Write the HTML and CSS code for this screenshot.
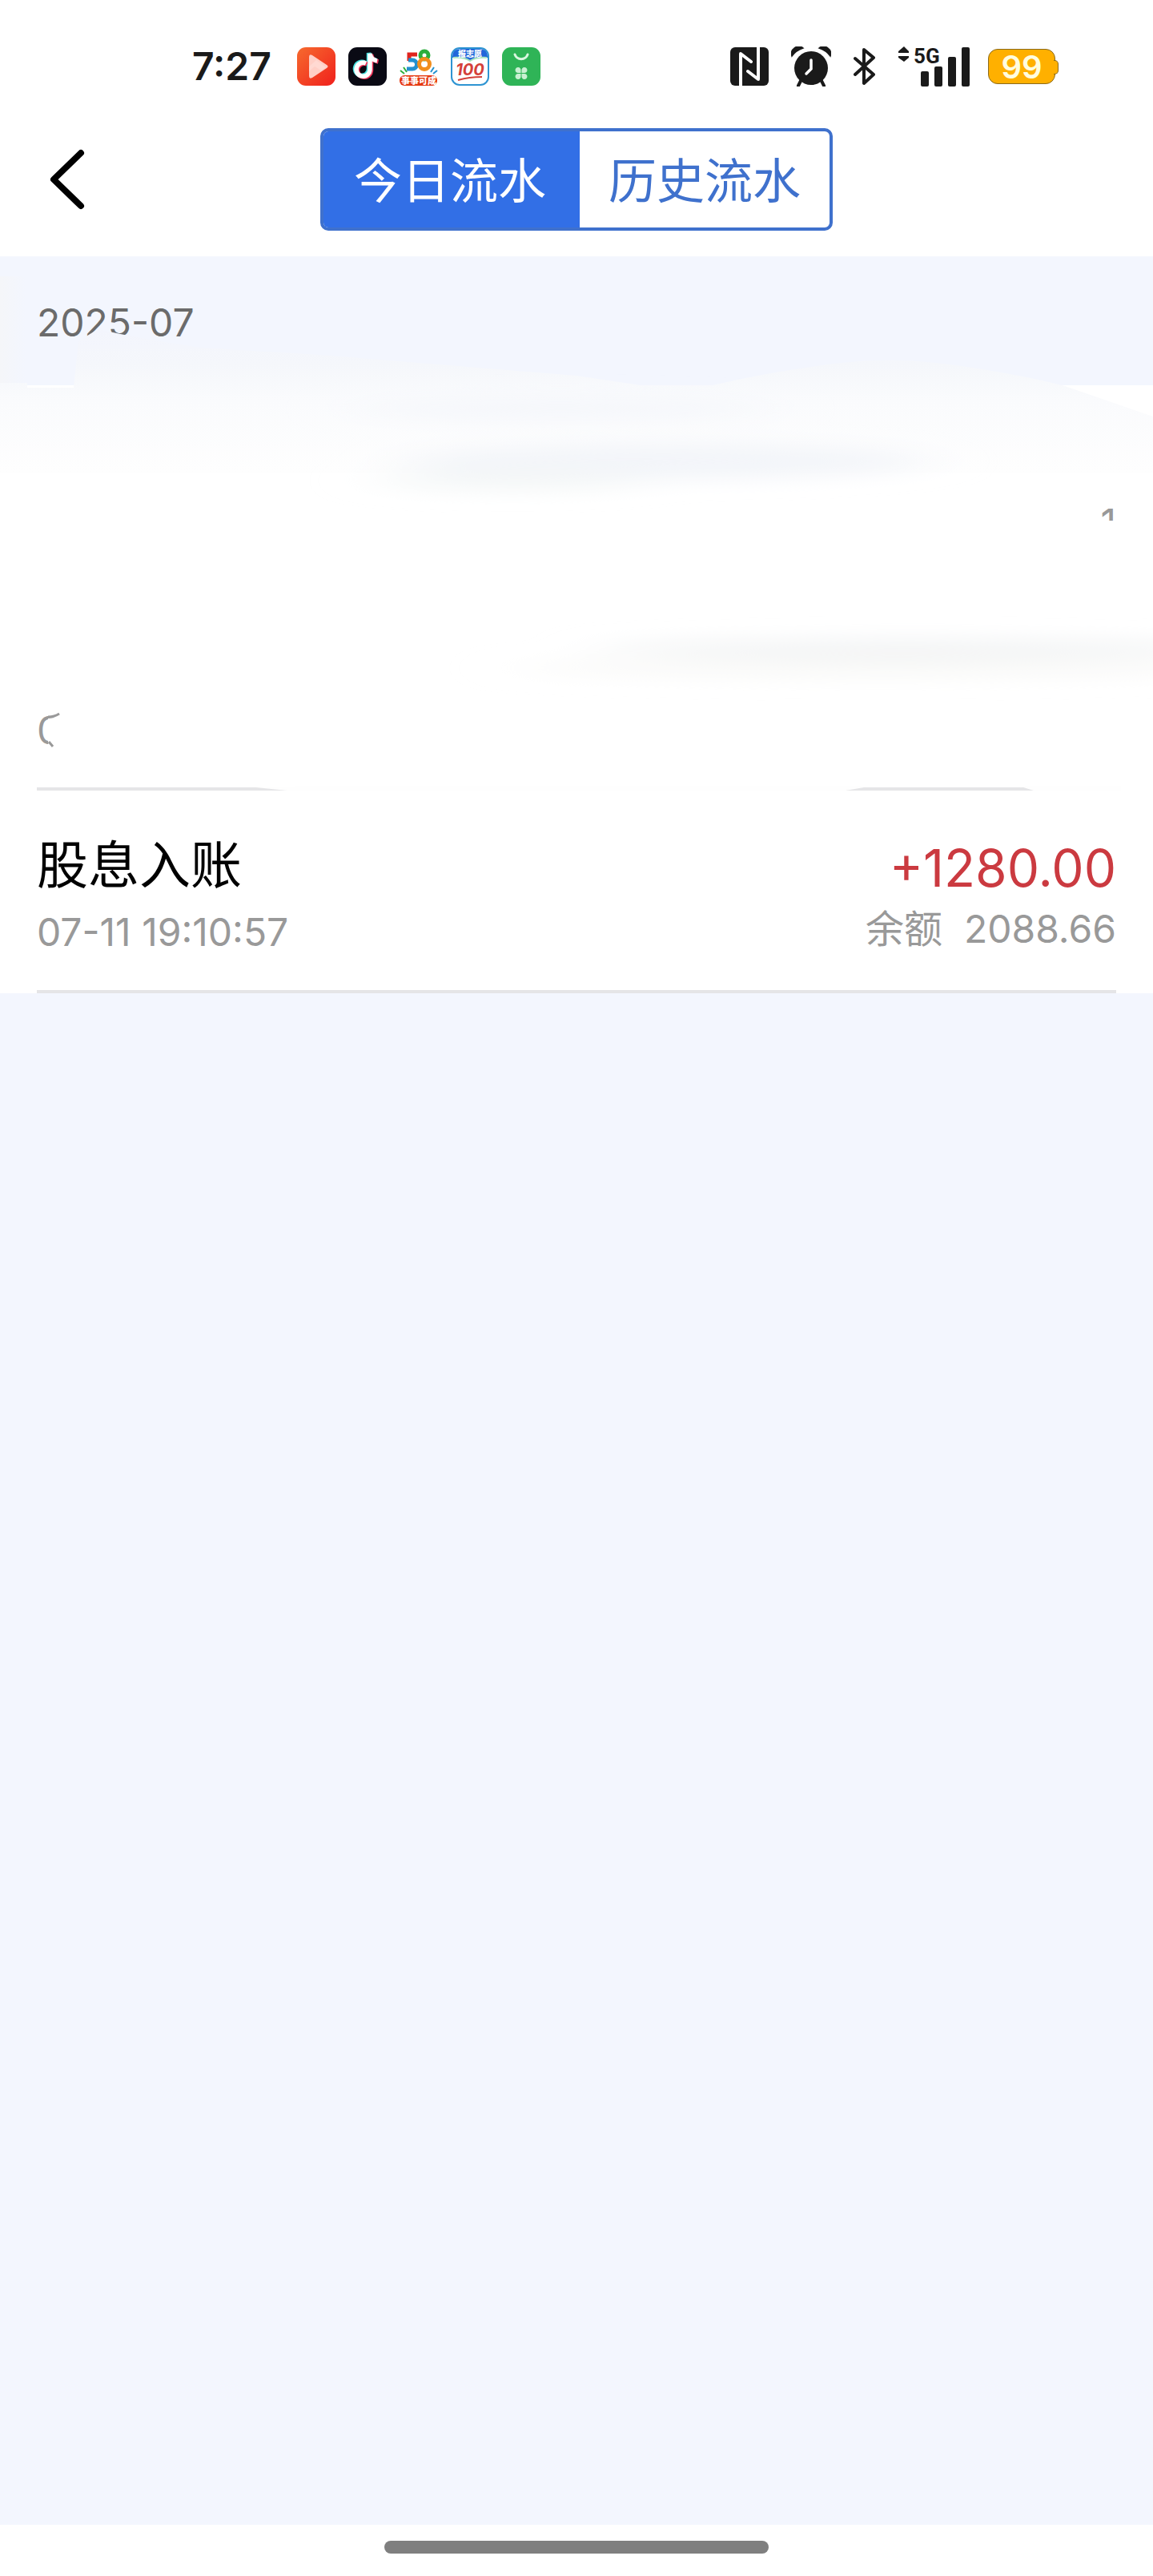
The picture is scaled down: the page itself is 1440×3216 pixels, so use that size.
FILE: index.html
```
<!DOCTYPE html>
<html lang="zh-CN">

<head>
    <meta charset="UTF-8">
    <meta name="viewport" content="width=device-width, initial-scale=1.0">
    <title>今日流水</title>
    <link rel="stylesheet" href="styles.css">
</head>

<body>
    <div class="status">
        <span class="time">7:27</span>
        <div class="apps">
            <svg class="app" viewBox="0 0 48 48">
                <defs>
                    <linearGradient id="playBg" x1="0" y1="0" x2="1" y2="1">
                        <stop offset="0" stop-color="#f66a2e" />
                        <stop offset="1" stop-color="#f0201c" />
                    </linearGradient>
                </defs>
                <rect width="48" height="48" rx="11" fill="url(#playBg)" />
                <path d="M15 12q0-4 4-2l18 12q3 2 0 4L19 38q-4 2-4-2z" fill="#ffcfc6" />
                <path d="M15 24l9-8 12 9-6 4-8-5-7 6z" fill="#ffe3dd" opacity=".5" />
            </svg>
            <svg class="app" viewBox="0 0 48 48">
                <rect width="48" height="48" rx="11" fill="#0a0a14" />
                <g fill="none" stroke-width="5.5">
                    <path d="M22 20a8.500 8.500 0 1 0 5 8V8c1 6 4 8 9 9" stroke="#46e0e0" transform="translate(-1.500 -1)" />
                    <path d="M22 20a8.500 8.500 0 1 0 5 8V8c1 6 4 8 9 9" stroke="#f0345a" transform="translate(1.500 1)" />
                    <path d="M22 20a8.500 8.500 0 1 0 5 8V8c1 6 4 8 9 9" stroke="#fff" />
                </g>
            </svg>
            <svg class="app" viewBox="0 0 48 48">
                <g fill="none" stroke-width="5">
                    <path d="M22 9H12v8" stroke="#e0231d" />
                    <path d="M11 16h5a5.500 5.500 0 0 1 0 11H9" stroke="#2291cf" />
                    <circle cx="31" cy="10" r="5" stroke="#2cae3c" />
                    <circle cx="31" cy="21" r="6.500" stroke="#f18e1c" />
                </g>
                <path d="M1 29l5 4M5 25l4 6" stroke="#2cae3c" stroke-width="2" />
                <path d="M47 29l-5 4M43 25l-4 6" stroke="#2291cf" stroke-width="2" />
                <rect y="35" width="47" height="13" rx="6" fill="#e5380f" />
                <text class="app-tag" x="24" y="46" font-size="11">事事可成</text>
            </svg>
            <svg class="app" viewBox="0 0 48 48">
                <rect x="1" y="1" width="46" height="46" rx="10" fill="#fff" stroke="#2e94d2" stroke-width="2" />
                <path d="M2 12Q2 2 12 2h24q10 0 10 10v1q-14-1-22 4-8-5-22-4z" fill="#2167da" />
                <path d="M3 13q13-1 21 4 8-5 21-4" fill="none" stroke="#a8e6c0" stroke-width="2" />
                <text class="app-tag" x="24" y="12" font-size="10">报志愿</text>
                <text class="app-score" x="24" y="35" font-size="20">100</text>
                <path d="M9 41q14-4 30-4" fill="none" stroke="#d4403a" stroke-width="2" />
            </svg>
            <svg class="app" viewBox="0 0 48 48">
                <rect width="48" height="48" rx="11" fill="#2fb457" />
                <path d="M16 9a8.500 8.500 0 0 0 16 0" fill="none" stroke="#d9f6df" stroke-width="3" stroke-linecap="round" />
                <g fill="#c9f0d2">
                    <path d="M23.500 32h-3a3.500 3.500 0 1 1 3-3z" />
                    <path d="M24.500 32h3a3.500 3.500 0 1 0-3-3z" />
                    <path d="M23.500 33h-3a3.500 3.500 0 1 0 3 3z" />
                    <path d="M24.500 33h3a3.500 3.500 0 1 1-3 3z" />
                </g>
            </svg>
        </div>
        <div class="signals">
            <svg class="nfc" viewBox="0 0 48 48">
                <rect width="48" height="48" rx="6" fill="#1a1a1a" />
                <path d="M13 48V8l13 10M35 0v40L22 30" fill="none" stroke="#fff" stroke-width="4" stroke-linejoin="round" stroke-linecap="round" />
            </svg>
            <svg class="alarm" viewBox="0 0 50 50">
                <g fill="#1a1a1a">
                    <circle cx="25" cy="27" r="21" />
                    <path d="M1 12A9 9 0 0 1 15 2q-9 3-14 10zM49 12A9 9 0 0 0 35 2q9 3 14 10z" stroke="#1a1a1a" stroke-width="1.500" />
                </g>
                <path d="M13 41l-4 8M37 41l4 8" stroke="#1a1a1a" stroke-width="4" stroke-linecap="round" />
                <path d="M25 17v11l-6 6" fill="none" stroke="#fff" stroke-width="3.500" stroke-linecap="round" />
            </svg>
            <svg class="bluetooth" viewBox="0 0 28 48">
                <path d="M2 14l23 20-12 11V3l12 10L2 34" fill="none" stroke="#1a1a1a" stroke-width="4" stroke-linejoin="round" stroke-linecap="round" />
            </svg>
            <svg class="signal" viewBox="0 0 90 50">
                <g fill="#1a1a1a">
                    <path d="M7 0l6 6v2H0V6zM7 19l6-5v-2H0v2z" />
                    <text class="network" x="19" y="21" font-size="26">5G</text>
                    <rect x="28" y="31" width="10" height="19" rx="2" />
                    <rect x="45" y="25" width="10" height="25" rx="2" />
                    <rect x="62" y="13" width="10" height="37" rx="2" />
                    <rect x="79" y="1" width="10" height="49" rx="2" />
                </g>
            </svg>
            <div class="battery">99</div>
        </div>
    </div>

    <header class="header">
        <button class="back" aria-label="返回">
            <svg viewBox="0 0 44 76">
                <path d="M39 5L5 38l34 33" fill="none" stroke="#000" stroke-width="8" stroke-linecap="round" stroke-linejoin="round" />
            </svg>
        </button>
        <nav class="tabs">
            <button class="tab active">今日流水</button>
            <button class="tab">历史流水</button>
        </nav>
    </header>

    <main class="ledger">
        <h2 class="month">2025-07</h2>
        <div class="row faded">
            <span class="date">0</span>
            <span class="balance">1</span>
        </div>
        <div class="row">
            <div class="col">
                <span class="name">股息入账</span>
                <span class="date">07-11 19:10:57</span>
            </div>
            <div class="col right">
                <span class="amount">+1280.00</span>
                <span class="balance">余额&nbsp; 2088.66</span>
            </div>
        </div>

        <!-- smudge over the first entry -->
        <svg class="smudge" viewBox="0 0 1440 680" preserveAspectRatio="none" aria-hidden="true">
            <defs>
                <linearGradient id="veil" gradientUnits="userSpaceOnUse" x1="0" y1="90" x2="0" y2="270">
                    <stop offset="0" stop-color="#f3f5fd" />
                    <stop offset=".25" stop-color="#f5f7fb" />
                    <stop offset=".5" stop-color="#fafbfd" />
                    <stop offset="1" stop-color="#fefefe" />
                </linearGradient>
                <linearGradient id="edge" x1="0" y1="0" x2="1" y2="0">
                    <stop offset="0" stop-color="#f5f6f9" />
                    <stop offset="1" stop-color="#f3f6fe" />
                </linearGradient>
                <filter id="soft" x="-20%" y="-100%" width="140%" height="300%">
                    <feGaussianBlur stdDeviation="40 12" />
                </filter>
            </defs>
            <rect y="25" width="32" height="136" fill="url(#edge)" />
            <path d="M0 158H34V164H92L98 106 122 91 160 99 200 106 250 114 400 123 560 136 720 149 800 161H890Q960 144 1050 133 1110 126 1170 133 1260 144 1330 162L1440 200V270H0z" fill="url(#veil)" />
            <g filter="url(#soft)">
                <ellipse cx="700" cy="190" rx="260" ry="14" fill="#f5f7fb" />
                <ellipse cx="830" cy="256" rx="330" ry="22" fill="#f3f5f9" />
                <ellipse cx="640" cy="280" rx="170" ry="12" fill="#f4f7f7" />
                <ellipse cx="1140" cy="490" rx="400" ry="12" fill="#f3f4f5" />
                <ellipse cx="1100" cy="514" rx="460" ry="12" fill="#f9f9f8" />
            </g>
            <path d="M80 562L68 576 60 577V608L70 622H100V562z" fill="#fff" />
            <path d="M60 575q8 0 14-4M61 606l5 6" fill="none" stroke="#999" stroke-width="3" />
            <path d="M1370 330H1400V350H1370z" fill="#fff" />
            <path d="M310 662L368 668H1050L1085 662z" fill="#fefefe" />
            <path d="M368 661H1078L1048 668H368zM1272 661H1400V668H1294z" fill="#fefefe" />
        </svg>
    </main>

    <footer class="home">
        <div class="home-bar"></div>
    </footer>
</body>

</html>
```
FILE: styles.css
```
* {
    box-sizing: border-box;
}

body {
    margin: 0;
    min-height: 100vh;
    display: flex;
    flex-direction: column;
    background-color: #f3f6fe;
    font-family: Inter, "Noto Sans CJK SC", sans-serif;
}

svg {
    display: block;
}

button {
    padding: 0;
    border: none;
    background: none;
    font-family: inherit;
    cursor: pointer;
}

.status {
    display: flex;
    align-items: center;
    height: 128px;
    padding: 38px 122px 0 240px;
    background-color: #fff;
    color: #1a1a1a;
}

.time {
    font-size: 48px;
    font-weight: 600;
    line-height: 56px;
}

.apps {
    display: flex;
    gap: 16px;
    margin-left: 32px;
}

.app,
.nfc {
    width: 48px;
    height: 48px;
}

.app-tag {
    fill: #fff;
    font-weight: 900;
    text-anchor: middle;
}

.app-score {
    fill: #d4403a;
    font-weight: 700;
    font-style: italic;
    text-anchor: middle;
}

.signals {
    display: flex;
    align-items: center;
    gap: 28px;
    margin-left: auto;
}

.alarm {
    width: 50px;
    height: 50px;
}

.bluetooth {
    width: 28px;
    height: 48px;
}

.signal {
    width: 90px;
    height: 50px;
    overflow: visible;
}

.network {
    font-family: Roboto, sans-serif;
    font-weight: 700;
}

.battery {
    position: relative;
    width: 84px;
    height: 44px;
    margin-left: -6px;
    border: 1px solid #8a6a1c;
    border-radius: 12px;
    background-color: #ffb000;
    color: #fffde0;
    font-size: 40px;
    font-weight: 600;
    line-height: 44px;
    text-align: center;
}

.battery::after {
    content: "";
    position: absolute;
    top: 13px;
    right: -5px;
    width: 5px;
    height: 16px;
    border: 1px solid #8a6a1c;
    border-left: none;
    border-radius: 0 5px 5px 0;
    background-color: #ffb000;
}

.header {
    display: grid;
    grid-template-columns: 1fr 640px 1fr;
    align-items: center;
    padding: 32px 0;
    background-color: #fff;
}

.back {
    justify-self: start;
    margin-left: 62px;
}

.back svg {
    width: 44px;
    height: 76px;
}

.tabs {
    display: flex;
    border: 4px solid #3f71cd;
    border-radius: 10px;
    overflow: hidden;
}

.tab {
    flex: 1 1 312px;
    height: 120px;
    padding-top: 4px;
    color: #3f71cd;
    font-size: 60px;
    line-height: 72px;
}

.tab.active {
    flex-basis: 320px;
    border-right: 4px solid #326fe6;
    background-color: #326fe6;
    color: #fff;
}

.ledger {
    position: relative;
    flex: 1;
}

.month {
    margin: 0;
    padding: 51px 46px 46px;
    color: #6b6b6b;
    font-size: 48px;
    font-weight: 400;
    line-height: 64px;
}

.row {
    display: flex;
    justify-content: space-between;
    align-items: center;
    padding: 53px 46px 44px;
    background: linear-gradient(#e5e5e7, #e5e5e7) center bottom / calc(100% - 92px) 4px no-repeat #fff;
}

.row.faded {
    align-items: flex-start;
    min-height: 506px;
    padding: 140px 46px 43px;
}

.row.faded .date {
    align-self: flex-end;
}

.col {
    display: flex;
    flex-direction: column;
    gap: 12px;
}

.col.right {
    align-items: flex-end;
    gap: 4px;
}

.name {
    color: #000;
    font-size: 64px;
    line-height: 80px;
}

.amount {
    color: #cb3a40;
    font-size: 64px;
    line-height: 80px;
}

.date,
.balance {
    color: #999;
    font-size: 48px;
    line-height: 64px;
}

.smudge {
    position: absolute;
    top: 0;
    left: 0;
    width: 100%;
    height: 680px;
    pointer-events: none;
}

.home {
    display: flex;
    justify-content: center;
    height: 64px;
    padding-top: 20px;
    background-color: #fff;
}

.home-bar {
    width: 33.3333%;
    height: 16px;
    border-radius: 8px;
    background-color: #7f7f7f;
}
```
